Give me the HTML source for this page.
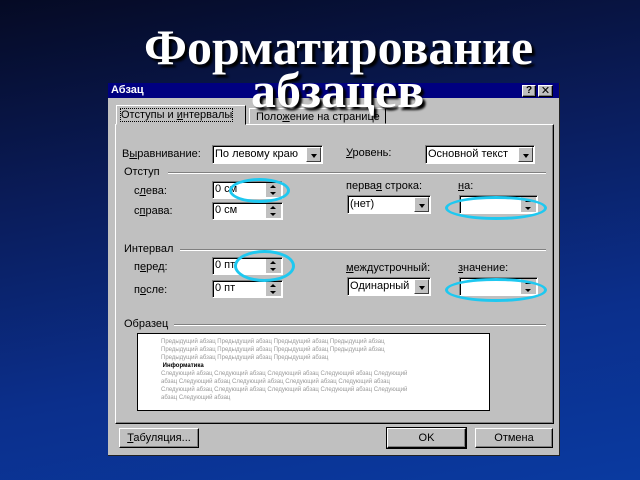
<!DOCTYPE html>
<html><head><meta charset="utf-8"><style>
body{margin:0;width:640px;height:480px;overflow:hidden;position:relative;font-family:"Liberation Sans","DejaVu Sans",sans-serif;
background:linear-gradient(170deg,#050a24 0%,#0a1c5a 35%,#0b2f8c 70%,#0a3aa0 100%);}
.a{position:absolute}
.t{font-size:11px;color:#000;white-space:nowrap}
.dlg{left:108px;top:83px;width:451px;height:372px;background:#c0c0c0;border-right:1px solid #222;border-bottom:1px solid #222}
.tb{left:108px;top:83px;width:451px;height:15px;background:#000080}
.box{background:#fff;border-top:1px solid #808080;border-left:1px solid #808080;border-right:1px solid #fff;border-bottom:1px solid #fff;box-shadow:inset 1px 1px 0 #000}
.arr{position:absolute;right:1px;top:1px;bottom:1px;width:15px;background:#c0c0c0;border:1px solid;border-color:#fff #404040 #404040 #fff;box-sizing:border-box}
.arr:after{content:"";position:absolute;left:4px;top:6px;border-left:3px solid transparent;border-right:3px solid transparent;border-top:4px solid #000}
.sp{position:absolute;right:1px;top:1px;bottom:1px;width:15px;background:#c0c0c0}
.sp:before{content:"";position:absolute;left:4px;top:2px;border-left:3px solid transparent;border-right:3px solid transparent;border-bottom:3px solid #000}
.sp:after{content:"";position:absolute;left:4px;bottom:2px;border-left:3px solid transparent;border-right:3px solid transparent;border-top:3px solid #000}
.line{height:0;border-top:1px solid #808080;border-bottom:1px solid #fff}
.btn{background:#c0c0c0;border:1px solid;border-color:#fff #000 #000 #fff;box-shadow:inset -1px -1px 0 #808080;text-align:center;font-size:11px;line-height:18px;box-sizing:border-box}
.ell{border:3px solid #1ec8f0;border-radius:50%;box-sizing:border-box}
.h{font-family:"Liberation Serif",serif;font-weight:bold;color:#fff;font-size:50px;line-height:56px;text-shadow:3px 3px 2px #000;white-space:nowrap}
.pv{font-size:6px;color:#999;line-height:8px;white-space:nowrap}
u{text-decoration:underline}
</style></head><body>
<div class="a dlg"></div>
<div class="a tb"></div>
<div class="a t" style="left:111px;top:84px;color:#fff;font-weight:bold">Абзац</div>
<div class="a btn" style="left:522px;top:85px;width:14px;height:12px;line-height:10px;font-size:10px;font-weight:bold">?</div>
<div class="a btn" style="left:538px;top:85px;width:15px;height:12px;line-height:10px;font-size:11px;font-weight:bold">✕</div>
<div class="a" style="left:115px;top:124px;width:437px;height:298px;border:1px solid;border-color:#fff #000 #000 #fff;box-shadow:inset -1px -1px 0 #808080"></div>
<div class="a" style="left:116px;top:105px;width:130px;height:20px;background:#c0c0c0;border:1px solid;border-color:#fff #000 transparent #fff;box-sizing:border-box"></div>
<div class="a t" style="left:121px;top:109px;outline:1px dotted #000">Отступы и <u>и</u>нтервалы</div>
<div class="a" style="left:249px;top:108px;width:137px;height:16px;border:1px solid;border-color:#fff #000 transparent #fff;box-sizing:border-box"></div>
<div class="a t" style="left:256px;top:111px">Поло<u>ж</u>ение на странице</div>
<div class="a t" style="left:122px;top:148px">В<u>ы</u>равнивание:</div>
<div class="a box" style="left:212px;top:145px;width:109px;height:17px"><span class="t" style="position:absolute;left:2px;top:2px">По левому краю</span><div class="arr"></div></div>
<div class="a t" style="left:346px;top:147px"><u>У</u>ровень:</div>
<div class="a box" style="left:425px;top:145px;width:108px;height:17px"><span class="t" style="position:absolute;left:2px;top:2px">Основной текст</span><div class="arr"></div></div>
<div class="a t" style="left:124px;top:166px">Отступ</div>
<div class="a line" style="left:168px;top:172px;width:378px"></div>
<div class="a t" style="left:134px;top:185px">с<u>л</u>ева:</div>
<div class="a box" style="left:212px;top:181px;width:69px;height:16px"><span class="t" style="position:absolute;left:2px;top:1px">0 см</span><div class="sp"></div></div>
<div class="a t" style="left:134px;top:205px">с<u>п</u>рава:</div>
<div class="a box" style="left:212px;top:202px;width:69px;height:16px"><span class="t" style="position:absolute;left:2px;top:1px">0 см</span><div class="sp"></div></div>
<div class="a t" style="left:346px;top:180px">перва<u>я</u> строка:</div>
<div class="a box" style="left:347px;top:195px;width:82px;height:17px"><span class="t" style="position:absolute;left:2px;top:2px">(нет)</span><div class="arr"></div></div>
<div class="a t" style="left:458px;top:180px"><u>н</u>а:</div>
<div class="a box" style="left:459px;top:195px;width:77px;height:17px"><div class="sp"></div></div>
<div class="a t" style="left:124px;top:243px">Интервал</div>
<div class="a line" style="left:180px;top:249px;width:366px"></div>
<div class="a t" style="left:134px;top:261px">п<u>е</u>ред:</div>
<div class="a box" style="left:212px;top:257px;width:69px;height:16px"><span class="t" style="position:absolute;left:2px;top:1px">0 пт</span><div class="sp"></div></div>
<div class="a t" style="left:134px;top:284px">п<u>о</u>сле:</div>
<div class="a box" style="left:212px;top:280px;width:69px;height:16px"><span class="t" style="position:absolute;left:2px;top:1px">0 пт</span><div class="sp"></div></div>
<div class="a t" style="left:346px;top:262px"><u>м</u>еждустрочный:</div>
<div class="a box" style="left:347px;top:277px;width:82px;height:17px"><span class="t" style="position:absolute;left:2px;top:2px">Одинарный</span><div class="arr"></div></div>
<div class="a t" style="left:458px;top:262px"><u>з</u>начение:</div>
<div class="a box" style="left:459px;top:277px;width:77px;height:17px"><div class="sp"></div></div>
<div class="a t" style="left:124px;top:318px">Образец</div>
<div class="a line" style="left:174px;top:324px;width:372px"></div>
<div class="a" style="left:137px;top:333px;width:351px;height:76px;background:#fff;border:1px solid #000"></div>
<div class="a pv" style="left:161px;top:338px">Предыдущий абзац Предыдущий абзац Предыдущий абзац Предыдущий абзац<br>Предыдущий абзац Предыдущий абзац Предыдущий абзац Предыдущий абзац<br>Предыдущий абзац Предыдущий абзац Предыдущий абзац<br><b style="color:#000">&nbsp;Информатика</b><br>Следующий абзац Следующий абзац Следующий абзац Следующий абзац Следующий<br>абзац Следующий абзац Следующий абзац Следующий абзац Следующий абзац<br>Следующий абзац Следующий абзац Следующий абзац Следующий абзац Следующий<br>абзац Следующий абзац</div>
<div class="a btn" style="left:119px;top:428px;width:80px;height:20px"><u>Т</u>абуляция...</div>
<div class="a btn" style="left:387px;top:428px;width:79px;height:20px;outline:1px solid #000">OK</div>
<div class="a btn" style="left:475px;top:428px;width:78px;height:20px">Отмена</div>
<div class="a ell" style="left:229px;top:178px;width:61px;height:25px"></div>
<div class="a ell" style="left:234px;top:250px;width:61px;height:32px"></div>
<div class="a ell" style="left:445px;top:196px;width:102px;height:24px"></div>
<div class="a ell" style="left:445px;top:278px;width:102px;height:24px"></div>
<div class="a h" style="left:144px;top:19px">Форматирование</div>
<div class="a h" style="left:251px;top:62px">абзацев</div>
</body></html>
